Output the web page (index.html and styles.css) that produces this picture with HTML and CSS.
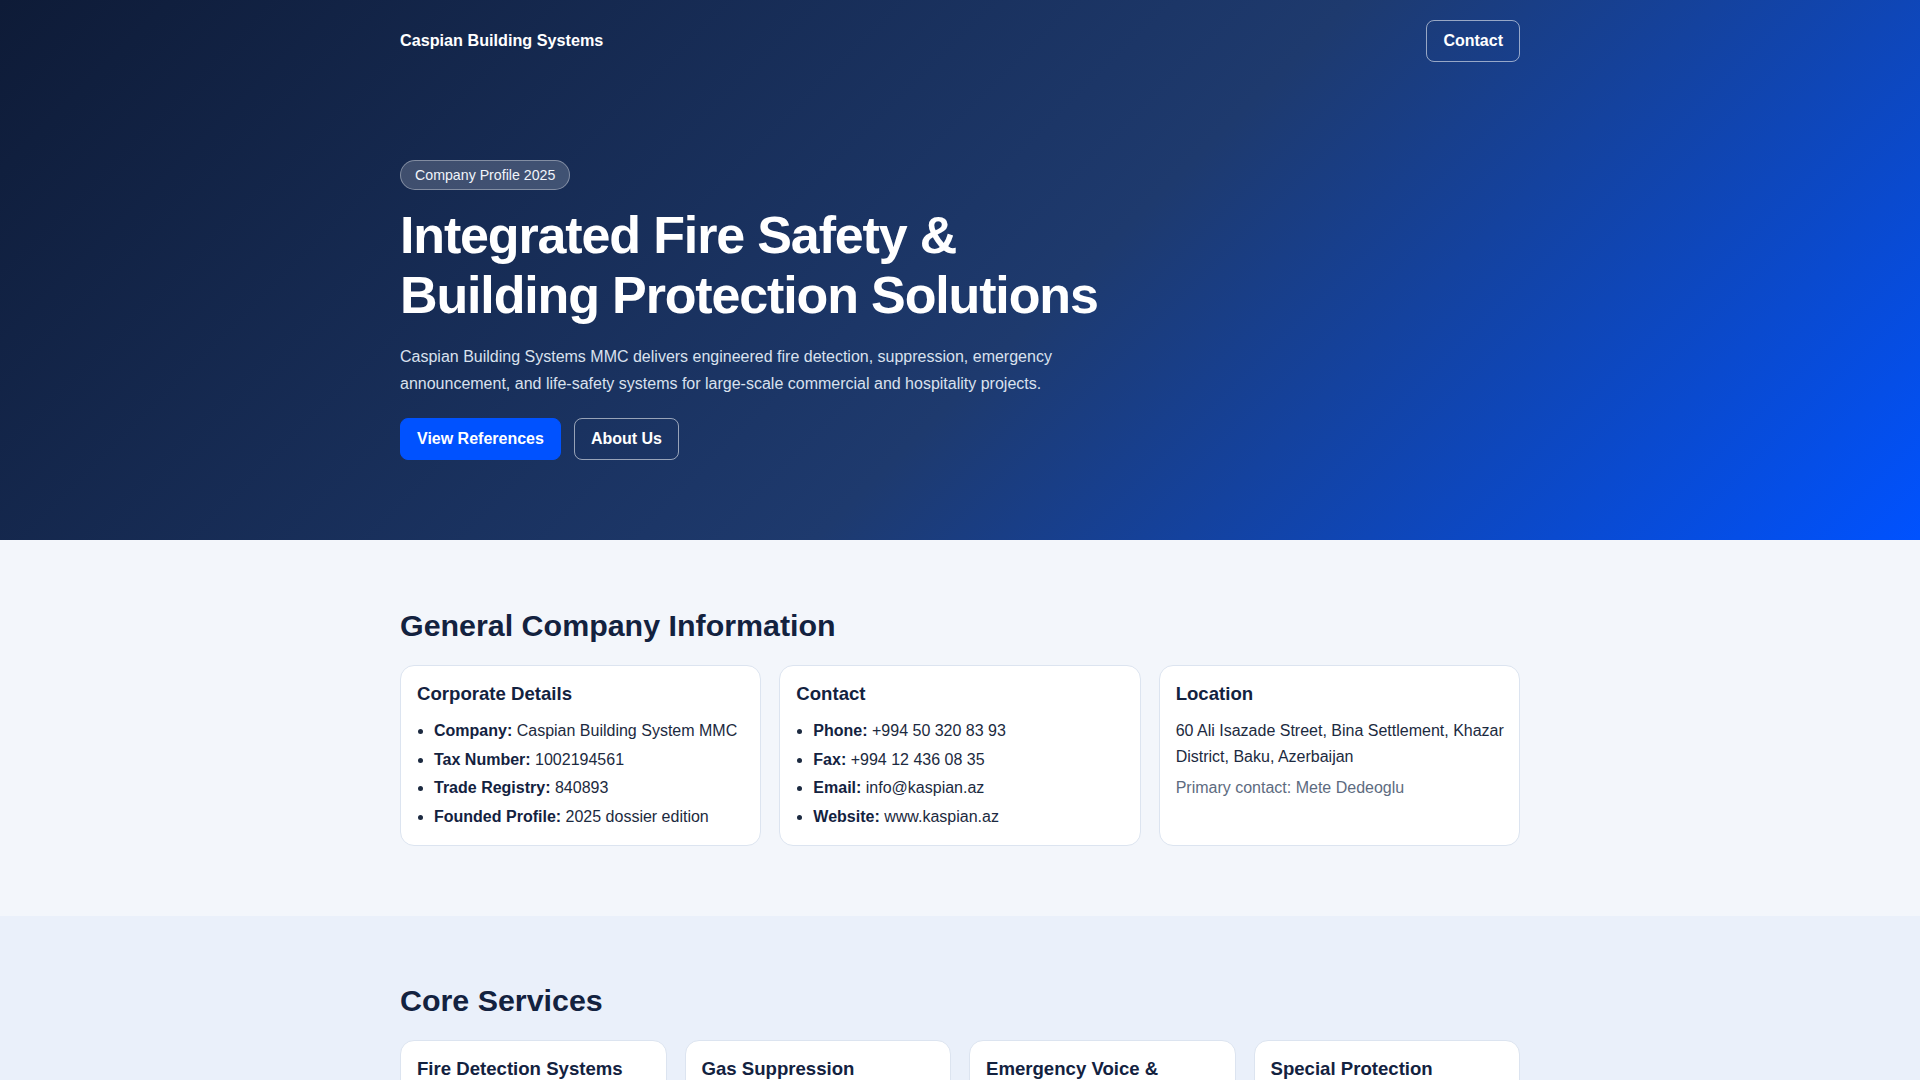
FILE: index.html
```html
<!DOCTYPE html>
<html lang="en">
<head>
<meta charset="utf-8">
<title>Caspian Building Systems — Company Profile 2025</title>
<link rel="stylesheet" href="styles.css">
</head>
<body>
<header class="hero">
  <div class="container">
    <nav class="nav">
      <a class="brand" href="#">Caspian Building Systems</a>
      <a class="btn btn-outline" href="#contact">Contact</a>
    </nav>
    <div class="hero-body">
      <span class="badge">Company Profile 2025</span>
      <h1 class="hero-title">Integrated Fire Safety &amp; Building Protection Solutions</h1>
      <p class="hero-text">Caspian Building Systems MMC delivers engineered fire detection, suppression, emergency announcement, and life-safety systems for large-scale commercial and hospitality projects.</p>
      <div class="hero-actions">
        <a class="btn btn-primary" href="#references">View References</a>
        <a class="btn btn-outline" href="#about">About Us</a>
      </div>
    </div>
  </div>
</header>

<section class="section section-info" id="about">
  <div class="container">
    <h2 class="section-title">General Company Information</h2>
    <div class="grid grid-3">
      <article class="card">
        <h3 class="card-title">Corporate Details</h3>
        <ul class="card-list">
          <li><strong>Company:</strong> Caspian Building System MMC</li>
          <li><strong>Tax Number:</strong> 1002194561</li>
          <li><strong>Trade Registry:</strong> 840893</li>
          <li><strong>Founded Profile:</strong> 2025 dossier edition</li>
        </ul>
      </article>
      <article class="card" id="contact">
        <h3 class="card-title">Contact</h3>
        <ul class="card-list">
          <li><strong>Phone:</strong> +994 50 320 83 93</li>
          <li><strong>Fax:</strong> +994 12 436 08 35</li>
          <li><strong>Email:</strong> info@kaspian.az</li>
          <li><strong>Website:</strong> www.kaspian.az</li>
        </ul>
      </article>
      <article class="card">
        <h3 class="card-title">Location</h3>
        <p class="card-text">60 Ali Isazade Street, Bina Settlement, Khazar District, Baku, Azerbaijan</p>
        <p class="card-muted">Primary contact: Mete Dedeoglu</p>
      </article>
    </div>
  </div>
</section>

<section class="section section-services" id="references">
  <div class="container">
    <h2 class="section-title">Core Services</h2>
    <div class="grid grid-4">
      <article class="card">
        <h3 class="card-title">Fire Detection Systems</h3>
        <p class="card-text">Addressable fire alarm panels, detectors and control modules.</p>
      </article>
      <article class="card">
        <h3 class="card-title">Gas Suppression</h3>
        <p class="card-text">Clean-agent and inert gas extinguishing for critical rooms.</p>
      </article>
      <article class="card">
        <h3 class="card-title">Emergency Voice &amp; Announcement</h3>
        <p class="card-text">Voice evacuation and public address systems.</p>
      </article>
      <article class="card">
        <h3 class="card-title">Special Protection</h3>
        <p class="card-text">Kitchen hood, aspirating and linear heat detection.</p>
      </article>
    </div>
  </div>
</section>
</body>
</html>
```

FILE: styles.css
```css
* { box-sizing: border-box; }

html, body {
  margin: 0;
  padding: 0;
}

body {
  font-family: "Liberation Sans", Arial, sans-serif;
  color: #1c2a40;
  background: #f3f6fb;
  font-size: 16px;
  line-height: 1.6;
}

a { text-decoration: none; color: inherit; }

.container {
  width: 1120px;
  margin: 0 auto;
}

/* HERO */
.hero {
  background: linear-gradient(135deg, #0e1b37 0%, #1e3a6e 55%, #0052ff 100%);
  color: #ffffff;
}

.nav {
  display: flex;
  align-items: center;
  justify-content: space-between;
  padding: 20px 0;
}

.brand {
  font-weight: 700;
  font-size: 16.2px;
  color: #ffffff;
}

.btn {
  display: inline-block;
  font-weight: 700;
  font-size: 16px;
  line-height: 20px;
  padding: 10px 16px;
  border-radius: 8px;
  border: 1px solid transparent;
  color: #ffffff;
}

.btn-outline {
  border-color: rgba(255, 255, 255, 0.55);
  background: transparent;
}

.btn-primary {
  background: #0052ff;
  border-color: #0052ff;
}

.hero-body {
  padding: 78px 0 80px;
  max-width: 740px;
}

.badge {
  display: inline-block;
  font-size: 14.2px;
  line-height: 18px;
  padding: 5px 14px;
  border-radius: 999px;
  background: rgba(255, 255, 255, 0.18);
  border: 1px solid rgba(255, 255, 255, 0.35);
  color: #f1f4fa;
}

.hero-title {
  margin: 16px 0 17px;
  font-size: 52px;
  line-height: 1.15;
  letter-spacing: -0.022em;
  font-weight: 700;
}

.hero-text {
  margin: 0 0 21px;
  font-size: 16px;
  line-height: 27px;
  color: #d9e1ee;
}

.hero-actions {
  display: flex;
  gap: 13px;
}

/* SECTIONS */
.section {
  padding: 69px 0 70px;
}

.section-info { background: #f3f6fb; }
.section-services { background: #eaf0fa; padding-top: 68px; }

.section-title {
  margin: 0 0 23px;
  font-size: 30.4px;
  line-height: 1.1;
  font-weight: 700;
  color: #13223f;
}

.section-services .section-title { margin-bottom: 22px; }

.grid {
  display: grid;
  gap: 18px;
}

.grid-3 { grid-template-columns: repeat(3, 1fr); }
.grid-4 { grid-template-columns: repeat(4, 1fr); }

.card {
  background: #ffffff;
  border: 1px solid #dce4f0;
  border-radius: 14px;
  padding: 17px 12px 16px 16px;
}

.card-title {
  margin: 0 0 13px;
  font-size: 18.6px;
  line-height: 22px;
  font-weight: 700;
  color: #13223f;
}

.card-list {
  margin: 0;
  padding-left: 17px;
  list-style: disc;
}

.card-list li {
  margin-bottom: 3px;
  color: #1c2a40;
}

.card-list li:last-child { margin-bottom: 0; }

.card-list strong { color: #13223f; }

.card-text {
  margin: 0 0 6px;
  color: #1c2a40;
}

.card-muted {
  margin: 0;
  color: #5d6b80;
}
```
